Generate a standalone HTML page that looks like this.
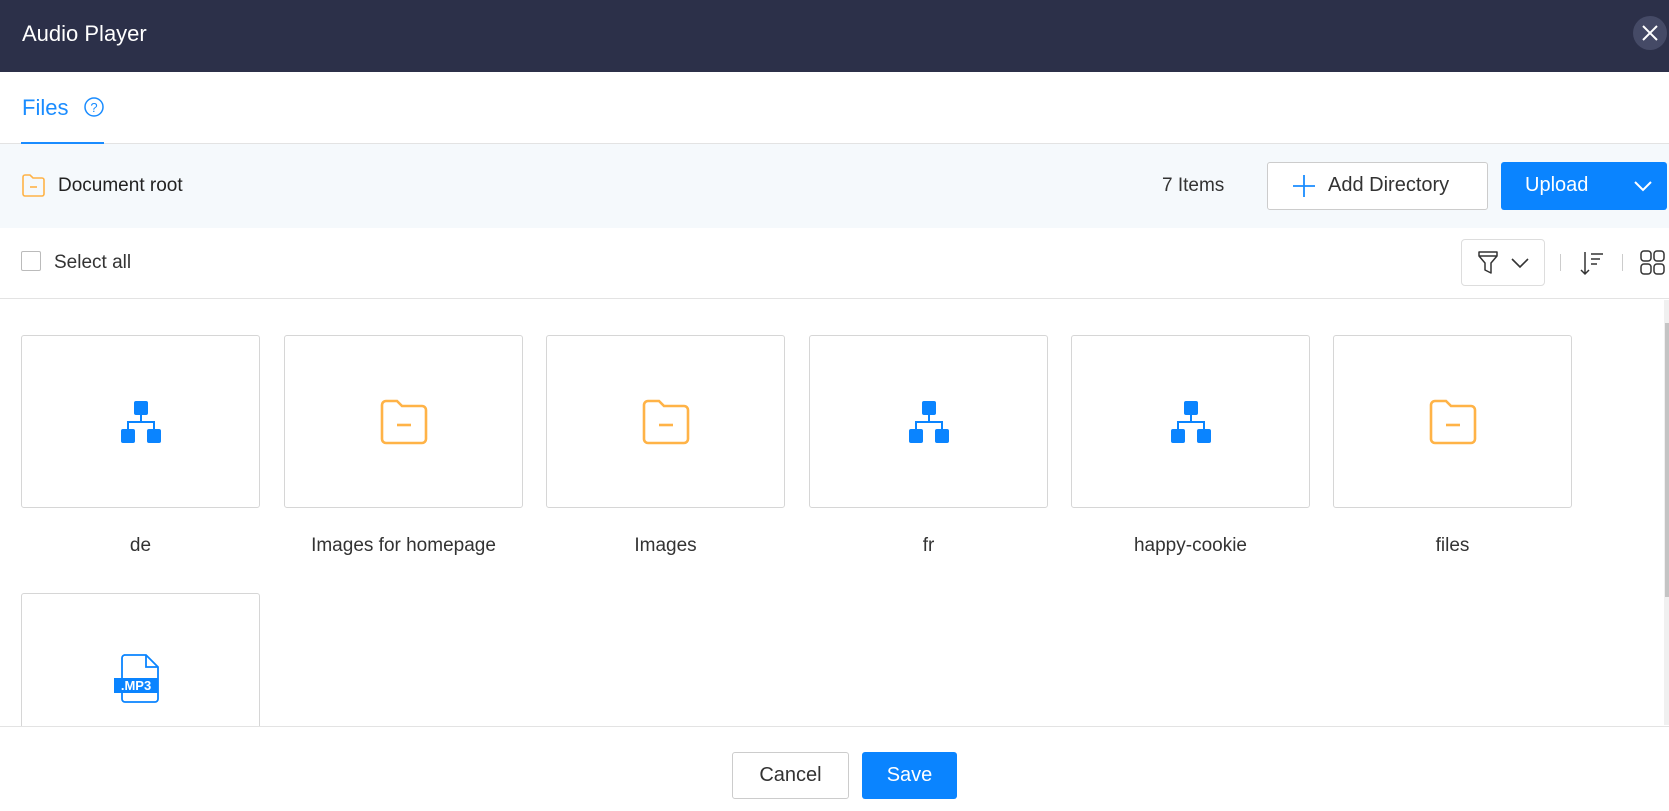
<!DOCTYPE html>
<html><head><style>
*{box-sizing:border-box;margin:0;padding:0}
body{width:1669px;height:811px;overflow:hidden;font-family:"Liberation Sans",sans-serif;background:#fff;position:relative;color:#222}
.abs{position:absolute}
.card{position:absolute;width:239px;height:173px;border:1px solid #d6d6d6;border-radius:3px;background:#fff}
.lbl{position:absolute;width:239px;text-align:center;font-size:19px;color:#333;top:535px}
.ic{position:absolute;left:50%;top:50%;transform:translate(-50%,-50%)}
</style></head><body>
<div class="abs" style="left:0;top:0;width:1669px;height:72px;background:#2c3049"></div>
<div class="abs" style="left:22px;top:21px;font-size:22px;color:#fff">Audio Player</div>
<div class="abs" style="left:1633px;top:16px;width:34px;height:34px;border-radius:50%;background:#454a66"></div>
<svg class="abs" style="left:1640px;top:23px" width="20" height="20"><path d="M3 3L17 17M17 3L3 17" stroke="#fff" stroke-width="2"/></svg>

<div class="abs" style="left:22px;top:95px;font-size:22px;color:#1a8cff">Files</div>
<svg class="abs" style="left:83px;top:96px" width="22" height="22"><circle cx="11" cy="11" r="9" fill="none" stroke="#1a8cff" stroke-width="1.5"/><text x="11" y="16" font-size="13" text-anchor="middle" fill="#1a8cff" font-family="Liberation Sans">?</text></svg>
<div class="abs" style="left:0;top:143px;width:1669px;height:1px;background:#e3e3e3"></div>
<div class="abs" style="left:21px;top:142px;width:83px;height:3px;background:#1a8cff"></div>

<div class="abs" style="left:0;top:144px;width:1669px;height:84px;background:#f5f9fc"></div>
<svg class="abs" style="left:21px;top:173px" width="25" height="25"><path d="M2 4a2 2 0 0 1 2-2h5l3 3h9a2 2 0 0 1 2 2v14a2 2 0 0 1-2 2H4a2 2 0 0 1-2-2z" fill="none" stroke="#ffb347" stroke-width="1.6"/><path d="M9 14h7" stroke="#ffb347" stroke-width="1.6"/></svg>
<div class="abs" style="left:58px;top:175px;font-size:19px;color:#222">Document root</div>
<div class="abs" style="left:1162px;top:175px;font-size:19px;color:#333">7 Items</div>
<div class="abs" style="left:1267px;top:162px;width:221px;height:48px;border:1px solid #ccc;border-radius:3px;background:#fff"></div>
<svg class="abs" style="left:1292px;top:174px" width="24" height="24"><path d="M12 1v22M1 12h22" stroke="#1a8cff" stroke-width="1.8"/></svg>
<div class="abs" style="left:1328px;top:174px;font-size:20px;color:#333">Add Directory</div>
<div class="abs" style="left:1501px;top:162px;width:166px;height:48px;border-radius:3px;background:#0a84ff"></div>
<div class="abs" style="left:1525px;top:174px;font-size:20px;color:#fff">Upload</div>
<svg class="abs" style="left:1633px;top:179px" width="20" height="14"><path d="M2 3l8 8 8-8" fill="none" stroke="#fff" stroke-width="2"/></svg>

<div class="abs" style="left:21px;top:251px;width:20px;height:20px;border:1px solid #bbb;border-radius:2px;background:#fff"></div>
<div class="abs" style="left:54px;top:252px;font-size:19px;color:#333">Select all</div>
<div class="abs" style="left:1461px;top:239px;width:84px;height:47px;border:1px solid #ddd;border-radius:4px;background:#fff"></div>
<svg class="abs" style="left:1477px;top:250px" width="22" height="26"><path d="M2 2h18v4l-6 7v10l-6-3v-7L2 6z M2 6h18" fill="none" stroke="#333" stroke-width="1.5" stroke-linejoin="round"/></svg>
<svg class="abs" style="left:1510px;top:256px" width="20" height="14"><path d="M2 3l8 8 8-8" fill="none" stroke="#333" stroke-width="1.6"/></svg>
<div class="abs" style="left:1560px;top:254px;width:1px;height:17px;background:#ccc"></div>
<svg class="abs" style="left:1580px;top:250px" width="26" height="28"><path d="M5 2v22M1 20l4 4 4-4M11 4h12M11 9h9M11 14h6" fill="none" stroke="#333" stroke-width="1.5"/></svg>
<div class="abs" style="left:1622px;top:254px;width:1px;height:17px;background:#ccc"></div>
<svg class="abs" style="left:1640px;top:250px" width="26" height="26"><g fill="none" stroke="#333" stroke-width="1.5"><rect x="1" y="1" width="10" height="10" rx="3"/><rect x="14" y="1" width="10" height="10" rx="3"/><rect x="1" y="14" width="10" height="10" rx="3"/><rect x="14" y="14" width="10" height="10" rx="3"/></g></svg>
<div class="abs" style="left:0;top:298px;width:1669px;height:1px;background:#e3e3e3"></div>
<div class="abs" style="left:1664px;top:300px;width:5px;height:425px;background:#f0f0f0"></div>
<div class="abs" style="left:1665px;top:323px;width:4px;height:274px;background:#c4c4c4"></div>

<!-- cards row 1 -->
<div class="card" style="left:21px;top:335px"><svg class="ic" width="44" height="44" viewBox="0 0 44 44"><rect x="15" y="1" width="14" height="14" rx="2" fill="#0a84ff"/><path d="M22 15v7M9 29v-7h26v7" fill="none" stroke="#0a84ff" stroke-width="2"/><rect x="2" y="29" width="14" height="14" rx="2" fill="#0a84ff"/><rect x="28" y="29" width="14" height="14" rx="2" fill="#0a84ff"/></svg></div>
<div class="card" style="left:284px;top:335px"><svg class="ic" width="48" height="48" viewBox="0 0 48 48"><path d="M2 7a4 4 0 0 1 4-4h11l5 5h20a4 4 0 0 1 4 4v29a4 4 0 0 1-4 4H6a4 4 0 0 1-4-4z" fill="none" stroke="#ffb347" stroke-width="2.6"/><path d="M17 27h14" stroke="#ffb347" stroke-width="2.6"/></svg></div>
<div class="card" style="left:546px;top:335px"><svg class="ic" width="48" height="48" viewBox="0 0 48 48"><path d="M2 7a4 4 0 0 1 4-4h11l5 5h20a4 4 0 0 1 4 4v29a4 4 0 0 1-4 4H6a4 4 0 0 1-4-4z" fill="none" stroke="#ffb347" stroke-width="2.6"/><path d="M17 27h14" stroke="#ffb347" stroke-width="2.6"/></svg></div>
<div class="card" style="left:809px;top:335px"><svg class="ic" width="44" height="44" viewBox="0 0 44 44"><rect x="15" y="1" width="14" height="14" rx="2" fill="#0a84ff"/><path d="M22 15v7M9 29v-7h26v7" fill="none" stroke="#0a84ff" stroke-width="2"/><rect x="2" y="29" width="14" height="14" rx="2" fill="#0a84ff"/><rect x="28" y="29" width="14" height="14" rx="2" fill="#0a84ff"/></svg></div>
<div class="card" style="left:1071px;top:335px"><svg class="ic" width="44" height="44" viewBox="0 0 44 44"><rect x="15" y="1" width="14" height="14" rx="2" fill="#0a84ff"/><path d="M22 15v7M9 29v-7h26v7" fill="none" stroke="#0a84ff" stroke-width="2"/><rect x="2" y="29" width="14" height="14" rx="2" fill="#0a84ff"/><rect x="28" y="29" width="14" height="14" rx="2" fill="#0a84ff"/></svg></div>
<div class="card" style="left:1333px;top:335px"><svg class="ic" width="48" height="48" viewBox="0 0 48 48"><path d="M2 7a4 4 0 0 1 4-4h11l5 5h20a4 4 0 0 1 4 4v29a4 4 0 0 1-4 4H6a4 4 0 0 1-4-4z" fill="none" stroke="#ffb347" stroke-width="2.6"/><path d="M17 27h14" stroke="#ffb347" stroke-width="2.6"/></svg></div>
<div class="lbl" style="left:21px">de</div>
<div class="lbl" style="left:284px">Images for homepage</div>
<div class="lbl" style="left:546px">Images</div>
<div class="lbl" style="left:809px">fr</div>
<div class="lbl" style="left:1071px">happy-cookie</div>
<div class="lbl" style="left:1333px">files</div>

<div class="card" style="left:21px;top:593px;height:200px"></div>
<svg class="abs" style="left:114px;top:654px" width="46" height="50" viewBox="0 0 46 50"><path d="M10 1h22l12 12v32a3 3 0 0 1-3 3H11a3 3 0 0 1-3-3V4a3 3 0 0 1 3-3z M32 1v12h12" fill="none" stroke="#0a84ff" stroke-width="1.8"/><rect x="0" y="24" width="44" height="15" fill="#0a84ff"/><text x="22" y="36" font-size="13" font-weight="bold" text-anchor="middle" fill="#fff" font-family="Liberation Sans">.MP3</text></svg>

<div class="abs" style="left:0;top:726px;width:1669px;height:85px;background:#fff;border-top:1px solid #e3e3e3"></div>
<div class="abs" style="left:732px;top:752px;width:117px;height:47px;border:1px solid #ccc;border-radius:3px;background:#fff;font-size:20px;color:#333;text-align:center;line-height:45px">Cancel</div>
<div class="abs" style="left:862px;top:752px;width:95px;height:47px;border-radius:3px;background:#0a84ff;font-size:20px;color:#fff;text-align:center;line-height:47px">Save</div>
</body></html>
